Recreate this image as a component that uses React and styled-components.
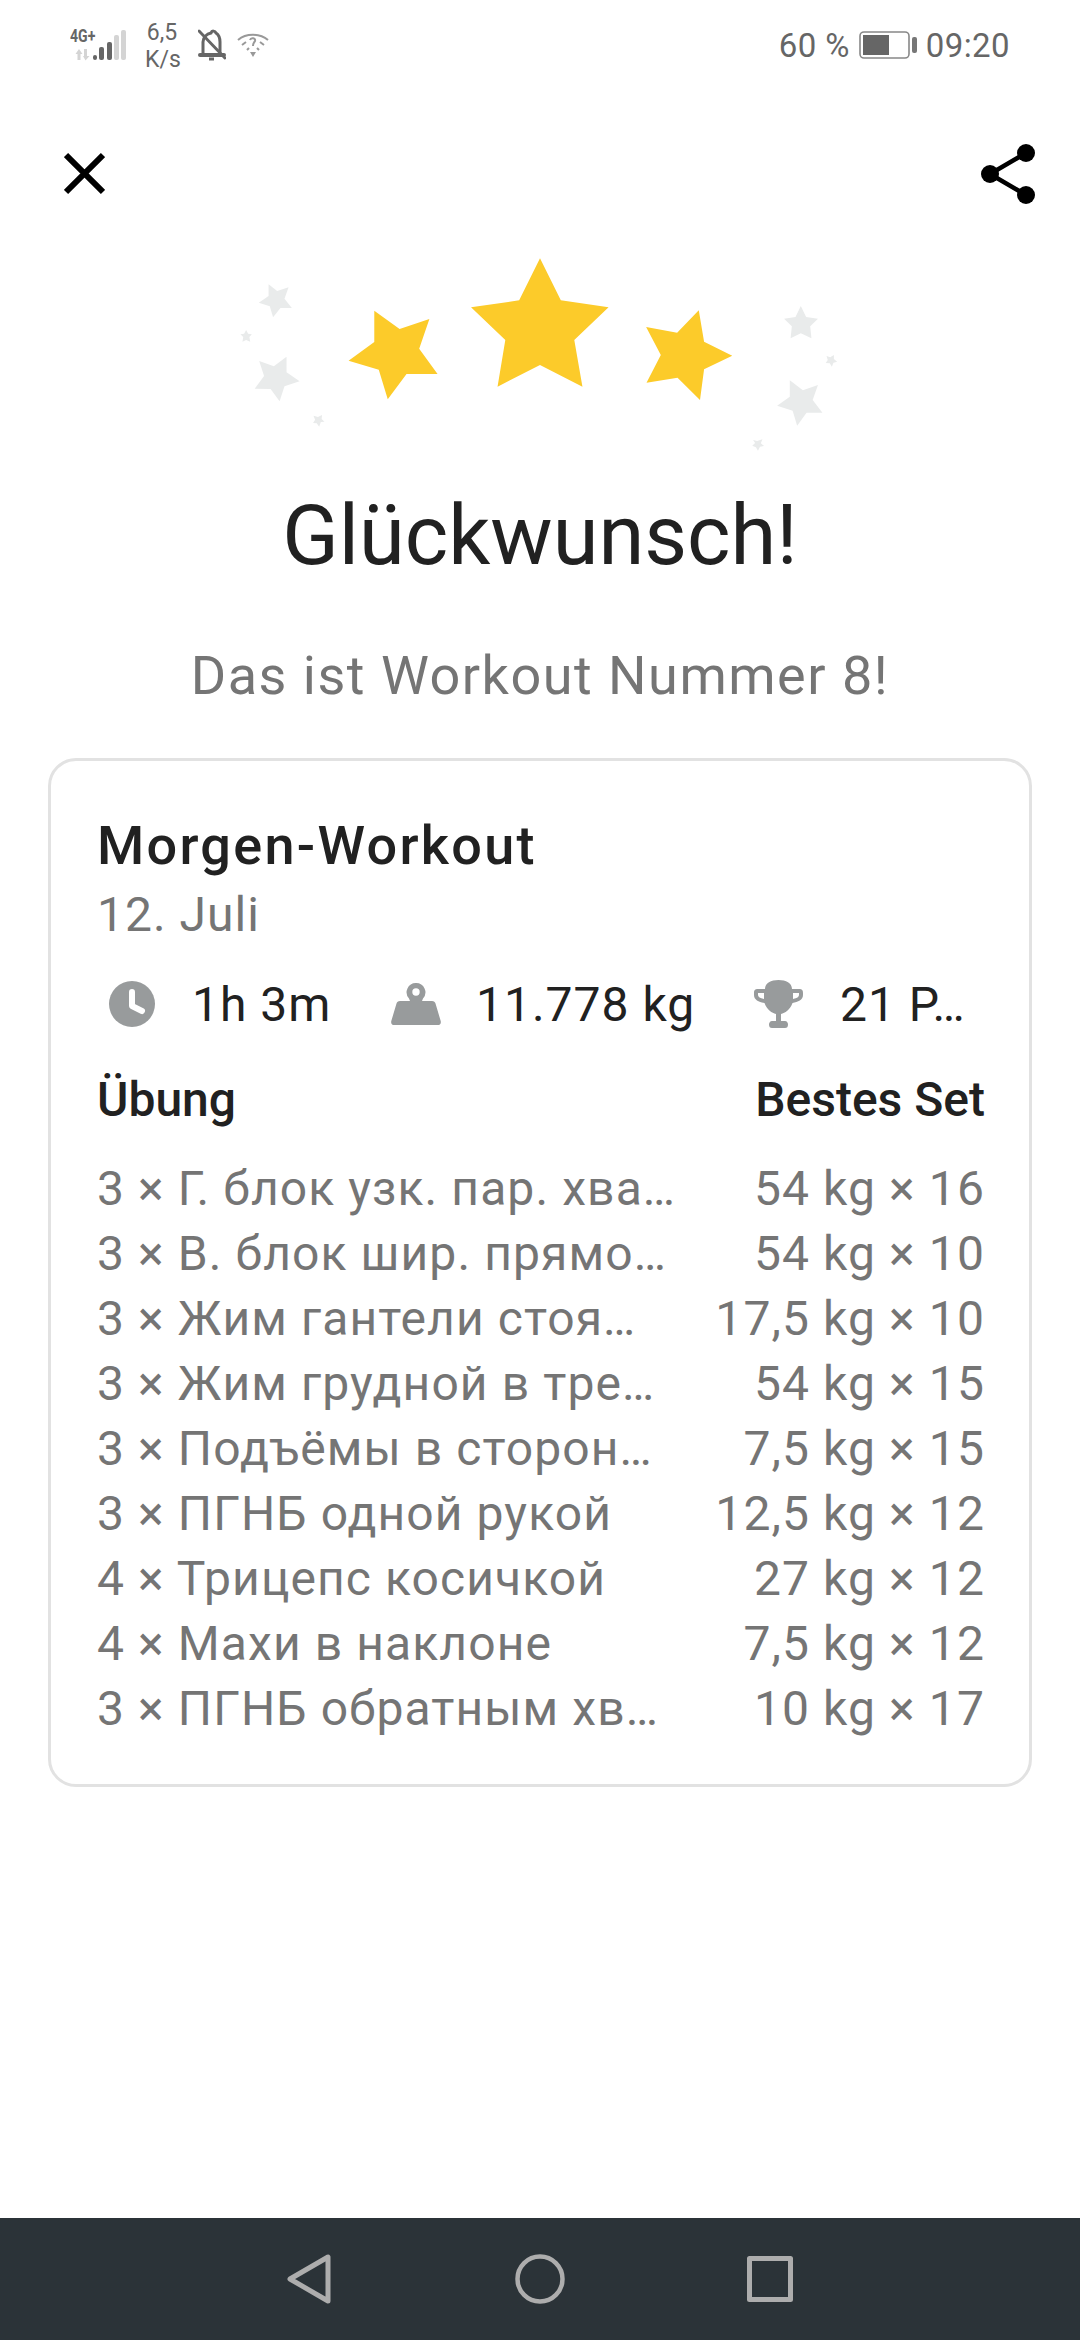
import React from 'react';
import styled, { createGlobalStyle } from 'styled-components';

const GlobalStyle = createGlobalStyle`
  html, body { margin: 0; padding: 0; background: #fff; }
  body { font-family: Roboto, "Liberation Sans", sans-serif; }
`;

const Page = styled.div`
  width: 1080px;
  height: 2340px;
  display: flex;
  flex-direction: column;
  background: #fff;
  overflow: hidden;
`;

const StatusBar = styled.div`
  height: 90px;
  display: flex;
  align-items: center;
  justify-content: space-between;
  padding: 0 70px 0 70px;
  color: #666;
`;
const StatusGroup = styled.div`
  display: flex;
  align-items: center;
  gap: ${p => p.$gap || 10}px;
`;
const NetBlock = styled.div`
  position: relative;
  width: 56px;
  height: 32px;
  display: flex;
`;
const NetLabel = styled.span`
  position: absolute;
  top: -2px;
  left: 0;
  font-size: 18px;
  line-height: 18px;
  font-weight: 700;
  white-space: nowrap;
  transform: scaleX(0.78);
  transform-origin: left top;
`;
const Speed = styled.div`
  font-size: 23px;
  line-height: 27px;
  text-align: center;
  width: 34px;
  padding-top: 2px;
`;
const StatusText = styled.span`
  font-size: 33px;
  letter-spacing: 0.4px;
`;

const TopBar = styled.div`
  height: 150px;
  box-sizing: border-box;
  padding: 54px 45px 0 64px;
  display: flex;
  align-items: flex-start;
  justify-content: space-between;
`;

const StarsWrap = styled.div`
  height: 220px;
  display: flex;
  justify-content: center;
`;

const Title = styled.h1`
  margin: 26px 0 0;
  height: 100px;
  line-height: 100px;
  font-size: 83px;
  font-weight: 400;
  color: #212121;
  text-align: center;
`;
const Subtitle = styled.div`
  margin-top: 55px;
  height: 70px;
  line-height: 70px;
  font-size: 54px;
  letter-spacing: 1.5px;
  color: #757575;
  text-align: center;
`;

const Card = styled.section`
  margin: 47px 48px 0;
  height: 1029px;
  box-sizing: border-box;
  border: 3px solid #e2e2e2;
  border-radius: 28px;
  padding: 50px 44px 0 46px;
`;
const WorkoutName = styled.div`
  height: 70px;
  line-height: 70px;
  font-size: 54px;
  font-weight: 500;
  letter-spacing: 2.3px;
  color: #212121;
`;
const WorkoutDate = styled.div`
  height: 68px;
  line-height: 68px;
  font-size: 48px;
  letter-spacing: 1px;
  color: #757575;
`;
const Stats = styled.div`
  margin-top: 20px;
  height: 70px;
  display: flex;
  align-items: center;
`;
const Stat = styled.div`
  display: flex;
  align-items: center;
  flex: 0 0 ${p => p.$w}px;
  gap: ${p => p.$gap}px;
  font-size: 48px;
  letter-spacing: 1px;
  color: #212121;
  padding-left: ${p => p.$pad || 0}px;
  box-sizing: border-box;
`;
const TableHead = styled.div`
  margin-top: 26px;
  height: 70px;
  line-height: 70px;
  display: flex;
  justify-content: space-between;
  font-size: 48px;
  font-weight: 500;
  color: #212121;
`;
const Rows = styled.div`
  margin-top: 21px;
`;
const Row = styled.div`
  height: 65px;
  line-height: 65px;
  display: flex;
  justify-content: space-between;
  white-space: nowrap;
  font-size: 48px;
  letter-spacing: 1.1px;
  color: #757575;
`;

const NavBar = styled.nav`
  margin-top: auto;
  height: 122px;
  background: #2b3338;
  display: flex;
  align-items: center;
`;
const NavSlot = styled.div`
  flex: 0 0 auto;
  margin-left: ${p => p.$left}px;
  display: flex;
`;

const YELLOW = '#fccb2a';
const GREY = '#e9ebeb';

const bigStars = [
  '784,55 835,181 952,202 868,300 888,440 784,375 680,440 699,300 615,202 733,181',
  '378,212 440,267 513,237 488,326 533,402 457,402 411,478 389,389 315,362 378,306',
  '1173,211 1186,305 1255,347 1186,388 1176,480 1121,413 1045,428 1080,345 1044,261 1120,278',
];
const smallStars = [
  '119,133 140,153 168,142 158,176 176,204 148,204 130,232 122,199 95,188 119,168',
  '163,350 163,397 195,424 158,439 146,484 124,447 85,446 108,408 96,363 132,379',
  '1423,198 1436,231 1465,236 1446,259 1449,295 1423,280 1398,295 1401,259 1382,236 1410,231',
  '1396,421 1428,451 1465,435 1452,480 1476,518 1437,518 1414,557 1403,512 1365,497 1396,470',
  '64,270 69,281 78,283 72,291 74,305 64,300 55,305 57,291 50,283 59,281',
  '229,527 240,531 250,525 249,537 256,545 247,546 243,560 237,550 228,549 233,539',
  '1486,348 1495,352 1504,345 1504,357 1512,365 1503,368 1499,380 1494,370 1484,369 1489,360',
  '1306,600 1316,603 1329,598 1325,610 1333,618 1323,620 1318,632 1313,622 1304,617 1311,609',
];

const rows = [
  ['3 × Г. блок узк. пар. хва…', '54 kg × 16'],
  ['3 × В. блок шир. прямо…', '54 kg × 10'],
  ['3 × Жим гантели стоя…', '17,5 kg × 10'],
  ['3 × Жим грудной в тре…', '54 kg × 15'],
  ['3 × Подъёмы в сторон…', '7,5 kg × 15'],
  ['3 × ПГНБ одной рукой', '12,5 kg × 12'],
  ['4 × Трицепс косичкой', '27 kg × 12'],
  ['4 × Махи в наклоне', '7,5 kg × 12'],
  ['3 × ПГНБ обратным хв…', '10 kg × 17'],
];

const Signal = () => (
  <svg width="56" height="32" viewBox="0 0 56 32">
    <g fill="#d4d4d4">
      <path d="M9 20L5.5 25H7.5V31H10.5V25H12.5Z" />
      <path d="M14 20H17V27H19.5L15.5 31.5L13 27H14Z" />
      <rect x="44" y="6" width="5" height="25" rx="2" />
      <rect x="51" y="1" width="5" height="30" rx="2" />
    </g>
    <g fill="#666">
      <rect x="23" y="26" width="4" height="5" rx="2" />
      <rect x="29" y="18" width="5" height="13" rx="2" />
      <rect x="37" y="13" width="5" height="18" rx="2" />
    </g>
  </svg>
);

const BellOff = () => (
  <svg width="28" height="32" viewBox="0 0 28 32" fill="none" stroke="#666" strokeWidth="3">
    <path d="M5 25V13C5 8 9 5 13 4C14 1 17 2 18 4C21 6 22 9 22 13V25" />
    <path d="M2 26H26" strokeLinecap="round" strokeWidth="4" />
    <path d="M11 30H16" />
    <path d="M1 2L27 29" strokeLinecap="round" />
  </svg>
);

const WifiQ = () => (
  <svg width="32" height="26" viewBox="0 0 32 26" fill="none" stroke="#999" strokeWidth="2">
    <path d="M1 8C9 1 23 1 31 8" />
    <path d="M5 13L9 10M27 13L23 10" />
    <path d="M10 18L12 16M22 18L20 16" />
    <path d="M13 8C14 5 19 6 18 9C17 11 16 11 16 14" />
    <path d="M13 20H19L16 25Z" fill="#999" stroke="none" />
  </svg>
);

const Battery = () => (
  <svg width="58" height="28" viewBox="0 0 58 28">
    <rect x="1" y="1" width="49" height="26" rx="4" fill="none" stroke="#888" strokeWidth="1.6" />
    <rect x="4" y="4" width="26" height="20" fill="#666" />
    <rect x="53" y="6" width="5" height="16" rx="2" fill="#777" />
  </svg>
);

const CloseIcon = () => (
  <svg width="41" height="60" viewBox="0 0 41 60" stroke="#000" strokeWidth="6">
    <path d="M2 11L39 48M39 11L2 48" />
  </svg>
);

const ShareIcon = () => (
  <svg width="54" height="60" viewBox="0 0 54 60" fill="#000" stroke="#000">
    <circle cx="45" cy="9" r="9" stroke="none" />
    <circle cx="9" cy="30" r="9" stroke="none" />
    <circle cx="45" cy="51" r="9" stroke="none" />
    <path d="M45 9L9 30L45 51" fill="none" strokeWidth="4.5" />
  </svg>
);

const ClockIcon = () => (
  <svg width="46" height="46" viewBox="0 0 46 46">
    <circle cx="23" cy="23" r="23" fill="#989b9c" />
    <path d="M23 11V25L33 30" fill="none" stroke="#fff" strokeWidth="6" strokeLinecap="round" strokeLinejoin="round" />
  </svg>
);

const WeightIcon = () => (
  <svg width="50" height="42" viewBox="0 0 50 42">
    <path fillRule="evenodd" fill="#989b9c" d="M25 0A9.3 9.3 0 0 1 32 15.5L31 18H41C43 18 44 19 44.5 20.5L49.7 38C50.3 40.5 49 42 47 42H3C1 42 -0.3 40.5 0.3 38L5.5 20.5C6 19 7 18 9 18H19L18 15.5A9.3 9.3 0 0 1 25 0ZM25 5.3A3.7 3.7 0 1 0 25 12.7A3.7 3.7 0 1 0 25 5.3Z" />
  </svg>
);

const TrophyIcon = () => (
  <svg width="49" height="48" viewBox="0 0 49 48">
    <path fillRule="evenodd" fill="#989b9c" d="M11 9C11 3 17 0 24.5 0C32 0 38 3 38 9H45C48 9 49 10 49 13V15C49 20 44 22 38.5 23C36 30 31 33 27 34V41H31C33 41 34 43 34 44.5C34 47 33 48 31 48H18C16 48 15 47 15 44.5C15 43 16 41 18 41H22V34C18 33 13 30 10.5 23C5 22 0 20 0 15V13C0 10 1 9 4 9ZM10 13H4V15C4 17 6 18 10 19ZM39 13V19C43 18 45 17 45 15V13Z" />
  </svg>
);

export default function App() {
  return (
    <Page>
      <GlobalStyle />
      <StatusBar>
        <StatusGroup $gap={19}>
          <NetBlock>
            <Signal />
            <NetLabel>4G+</NetLabel>
          </NetBlock>
          <Speed>6,5<br />K/s</Speed>
          <StatusGroup $gap={11}>
            <BellOff />
            <WifiQ />
          </StatusGroup>
        </StatusGroup>
        <StatusGroup $gap={9}>
          <StatusText>60 %</StatusText>
          <Battery />
          <StatusText>09:20</StatusText>
        </StatusGroup>
      </StatusBar>

      <TopBar>
        <CloseIcon />
        <ShareIcon />
      </TopBar>

      <StarsWrap>
        <svg width="640" height="220" viewBox="0 0 1568 660" preserveAspectRatio="none">
          {smallStars.map(s => <polygon key={s} points={s} fill={GREY} />)}
          {bigStars.map(s => <polygon key={s} points={s} fill={YELLOW} />)}
        </svg>
      </StarsWrap>

      <Title>Glückwunsch!</Title>
      <Subtitle>Das ist Workout Nummer 8!</Subtitle>

      <Card>
        <WorkoutName>Morgen-Workout</WorkoutName>
        <WorkoutDate>12. Juli</WorkoutDate>
        <Stats>
          <Stat $w={294} $gap={37} $pad={12}><ClockIcon />1h 3m</Stat>
          <Stat $w={363} $gap={35}><WeightIcon />11.778 kg</Stat>
          <Stat $w={230} $gap={37}><TrophyIcon />21 P…</Stat>
        </Stats>
        <TableHead>
          <span>Übung</span>
          <span>Bestes Set</span>
        </TableHead>
        <Rows>
          {rows.map(([name, best]) => (
            <Row key={name}>
              <span>{name}</span>
              <span>{best}</span>
            </Row>
          ))}
        </Rows>
      </Card>

      <NavBar>
        <NavSlot $left={287}>
          <svg width="44" height="50" viewBox="0 0 44 50" fill="none" stroke="#adadad" strokeWidth="5" strokeLinejoin="round">
            <path d="M41 3V47L3 25Z" />
          </svg>
        </NavSlot>
        <NavSlot $left={184}>
          <svg width="50" height="50" viewBox="0 0 50 50" fill="none" stroke="#adadad" strokeWidth="4.5">
            <circle cx="25" cy="25" r="22.5" />
          </svg>
        </NavSlot>
        <NavSlot $left={182}>
          <svg width="46" height="46" viewBox="0 0 46 46" fill="none" stroke="#adadad" strokeWidth="5" strokeLinejoin="round">
            <rect x="2.5" y="2.5" width="41" height="41" />
          </svg>
        </NavSlot>
      </NavBar>
    </Page>
  );
}
